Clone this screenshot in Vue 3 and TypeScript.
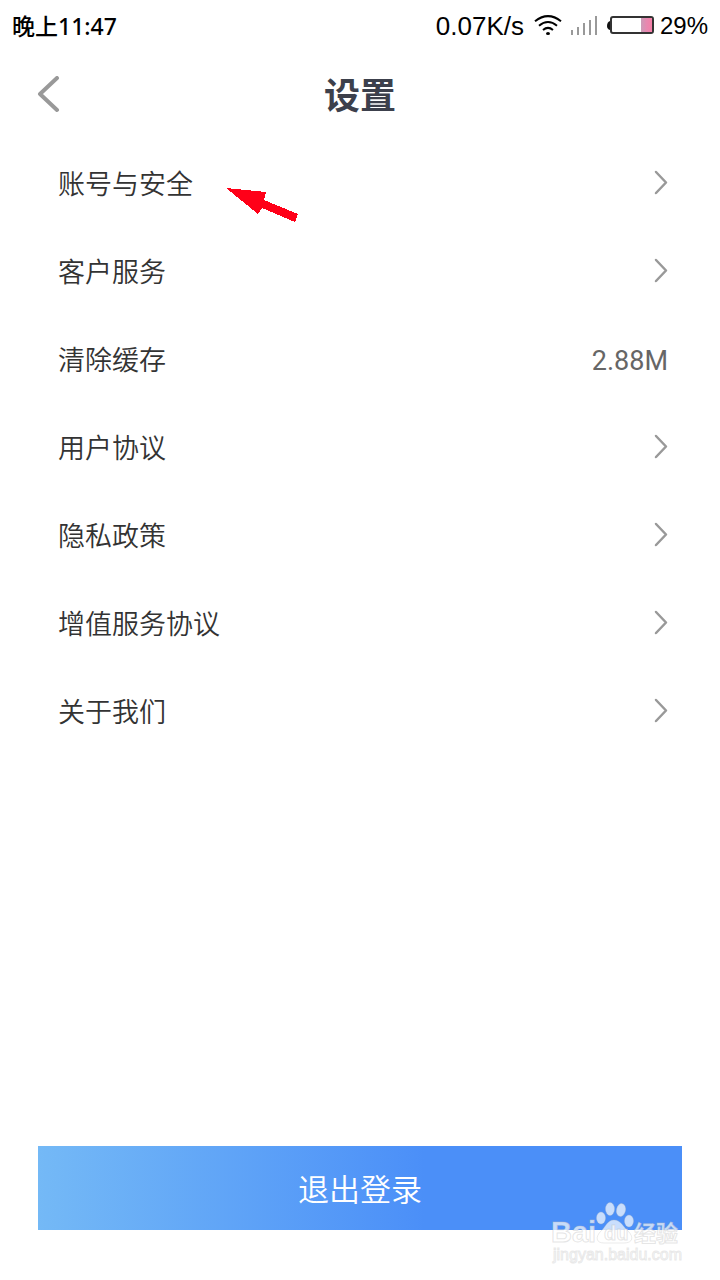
<script setup lang="ts">
interface SettingItem {
  label: string
  value?: string
  marked?: boolean
}

const items: SettingItem[] = [
  { label: '账号与安全', marked: true },
  { label: '客户服务' },
  { label: '清除缓存', value: '2.88M' },
  { label: '用户协议' },
  { label: '隐私政策' },
  { label: '增值服务协议' },
  { label: '关于我们' },
]
</script>

<template>
  <div class="page">
    <div class="status">
      <span class="time">晚上11:47</span>
      <div class="indicators">
        <span class="speed">0.07K/s</span>
        <svg class="wifi" width="28" height="22" viewBox="0 0 28 22" fill="none" stroke="#000" stroke-width="2" aria-hidden="true">
          <path d="M1 6.200Q14 -4 27 6.200" />
          <path d="M5 10.700Q14 3.200 23 10.700" />
          <path d="M9 14.900Q14 10.800 19 14.900" />
          <ellipse cx="14" cy="18.500" rx="2" ry="1.500" fill="#000" stroke="none" />
        </svg>
        <svg class="signal" width="28" height="20" viewBox="0 0 28 20" fill="#999" aria-hidden="true">
          <rect x="1" y="14" width="2" height="5" />
          <rect x="7" y="11" width="2" height="8" />
          <rect x="13" y="7" width="2" height="12" />
          <rect x="19" y="4" width="2" height="15" />
          <rect x="25" y="0" width="2" height="19" />
        </svg>
        <svg class="battery" width="48" height="20" viewBox="0 0 48 20" aria-hidden="true">
          <defs>
            <linearGradient id="charge">
              <stop offset="0" stop-color="#ca9cb8" />
              <stop offset="0.5" stop-color="#e788b0" />
              <stop offset="1" stop-color="#f57fa8" />
            </linearGradient>
          </defs>
          <path d="M4 5H3Q0 6 0 10Q0 13 3 14H4Z" fill="#111" />
          <rect x="4" y="1" width="42" height="16" rx="2" fill="#fff" stroke="#333" stroke-width="2" />
          <rect x="34" y="2" width="11" height="14" fill="url(#charge)" />
        </svg>
        <span class="percent">29%</span>
      </div>
    </div>

    <header class="header">
      <button class="back" type="button" aria-label="返回">
        <svg width="24" height="40" viewBox="0 0 24 40" fill="none" stroke="#999" stroke-width="4" stroke-linecap="round" stroke-linejoin="round" aria-hidden="true">
          <path d="M21 2L4 18L21 34" />
        </svg>
      </button>
      <h1 class="title">设置</h1>
    </header>

    <main class="list">
      <button v-for="item in items" :key="item.label" class="row" type="button">
        <span class="label">
          {{ item.label }}
          <svg v-if="item.marked" class="pointer" width="74" height="36" viewBox="0 0 74 36" fill="#ff0018" shape-rendering="crispEdges" aria-hidden="true">
            <path d="M0 1L40 5L38 13L72 27L69 35L36 21L32 27Z" />
          </svg>
        </span>
        <span v-if="item.value" class="value">{{ item.value }}</span>
        <svg v-else class="chevron" width="16" height="26" viewBox="0 0 16 26" fill="none" stroke="#999" stroke-width="2.500" stroke-linecap="round" stroke-linejoin="round" aria-hidden="true">
          <path d="M4 2L14 12.500L4 23" />
        </svg>
      </button>
    </main>

    <footer class="footer">
      <button class="logout" type="button">退出登录</button>
      <svg class="watermark" width="136" height="66" viewBox="0 0 136 66" role="img" aria-label="Baidu 经验">
        <g class="mark">
          <ellipse cx="51" cy="16" rx="4.500" ry="6" />
          <ellipse cx="60" cy="7" rx="4.500" ry="6.500" />
          <ellipse cx="71" cy="8" rx="4.500" ry="6.500" transform="rotate(12 71 8)" />
          <ellipse cx="79" cy="19" rx="4.500" ry="6" />
          <path d="M64 18C57 18 56 25 51 29C45 35 46 41 54 41C60 41 68 41 74 41C83 41 84 35 78 29C73 25 71 18 64 18Z" />
        </g>
        <text class="brand" x="1" y="40">Bai</text>
        <text class="brand du" x="54" y="38">du</text>
        <text class="brand han" x="84" y="39">经验</text>
        <text class="site" x="3" y="58">jingyan.baidu.com</text>
      </svg>
    </footer>
  </div>
</template>

<style>
body {
  margin: 0;
  background: #fff;
}
</style>

<style scoped>
.page {
  display: flex;
  flex-direction: column;
  min-height: 100vh;
  background: #fff;
  font-family: Roboto, "Noto Sans CJK SC", sans-serif;
}

button {
  border: 0;
  padding: 0;
  background: none;
  font-family: inherit;
  cursor: pointer;
}

.status {
  display: flex;
  align-items: center;
  justify-content: space-between;
  height: 52px;
  padding: 0 12px;
  color: #000;
}

.time {
  font: 500 23px/52px "Noto Sans", "Noto Sans CJK SC", sans-serif;
}

.indicators {
  display: flex;
  align-items: center;
}

.speed {
  font: 26px/52px "Liberation Sans", sans-serif;
}

.wifi {
  margin-left: 10px;
}

.signal {
  margin-left: 8px;
}

.battery {
  margin: 0 5px 0 9px;
}

.percent {
  font: 24px/52px "Liberation Sans", sans-serif;
}

.header {
  display: grid;
  grid-template-columns: 1fr auto 1fr;
  align-items: center;
  height: 87px;
  padding: 0 36px;
}

.back {
  display: flex;
  justify-self: start;
}

.title {
  margin: 0;
  padding-top: 2px;
  font-size: 36px;
  font-weight: 700;
  line-height: 52px;
  color: #3c404c;
}

.list {
  flex: 1;
}

.row {
  display: flex;
  align-items: center;
  justify-content: space-between;
  width: 100%;
  height: 88px;
  padding: 0 52px 0 58px;
}

.label {
  position: relative;
  padding-top: 4px;
  font-size: 27px;
  font-weight: 350;
  line-height: 40px;
  color: #333;
}

.pointer {
  position: absolute;
  top: 26px;
  left: 100%;
  margin-left: 33px;
}

.value {
  padding-top: 4px;
  font-size: 27px;
  line-height: 40px;
  color: #666;
}

.footer {
  position: relative;
  padding: 0 38px 50px;
}

.logout {
  display: block;
  width: 100%;
  height: 84px;
  padding-bottom: 2px;
  background: linear-gradient(90deg, #74b9f6, #4b8ff8 60%);
  font-size: 31px;
  font-weight: 350;
  color: #fff;
}

.watermark {
  position: absolute;
  right: 34px;
  bottom: 12px;
  pointer-events: none;
}

.mark {
  fill: rgba(255, 255, 255, 0.7);
  stroke: rgba(190, 190, 190, 0.3);
  stroke-width: 1;
}

.brand {
  font: 700 29px "Liberation Sans", sans-serif;
  fill: rgba(255, 255, 255, 0.7);
  stroke: rgba(190, 190, 190, 0.4);
  stroke-width: 1;
}

.du {
  font-size: 20px;
}

.han {
  font: 700 22px "Noto Sans CJK SC", sans-serif;
}

.site {
  font: 16px "Liberation Sans", sans-serif;
  fill: #fff;
  stroke: rgba(190, 190, 190, 0.35);
  stroke-width: 1;
}
</style>
